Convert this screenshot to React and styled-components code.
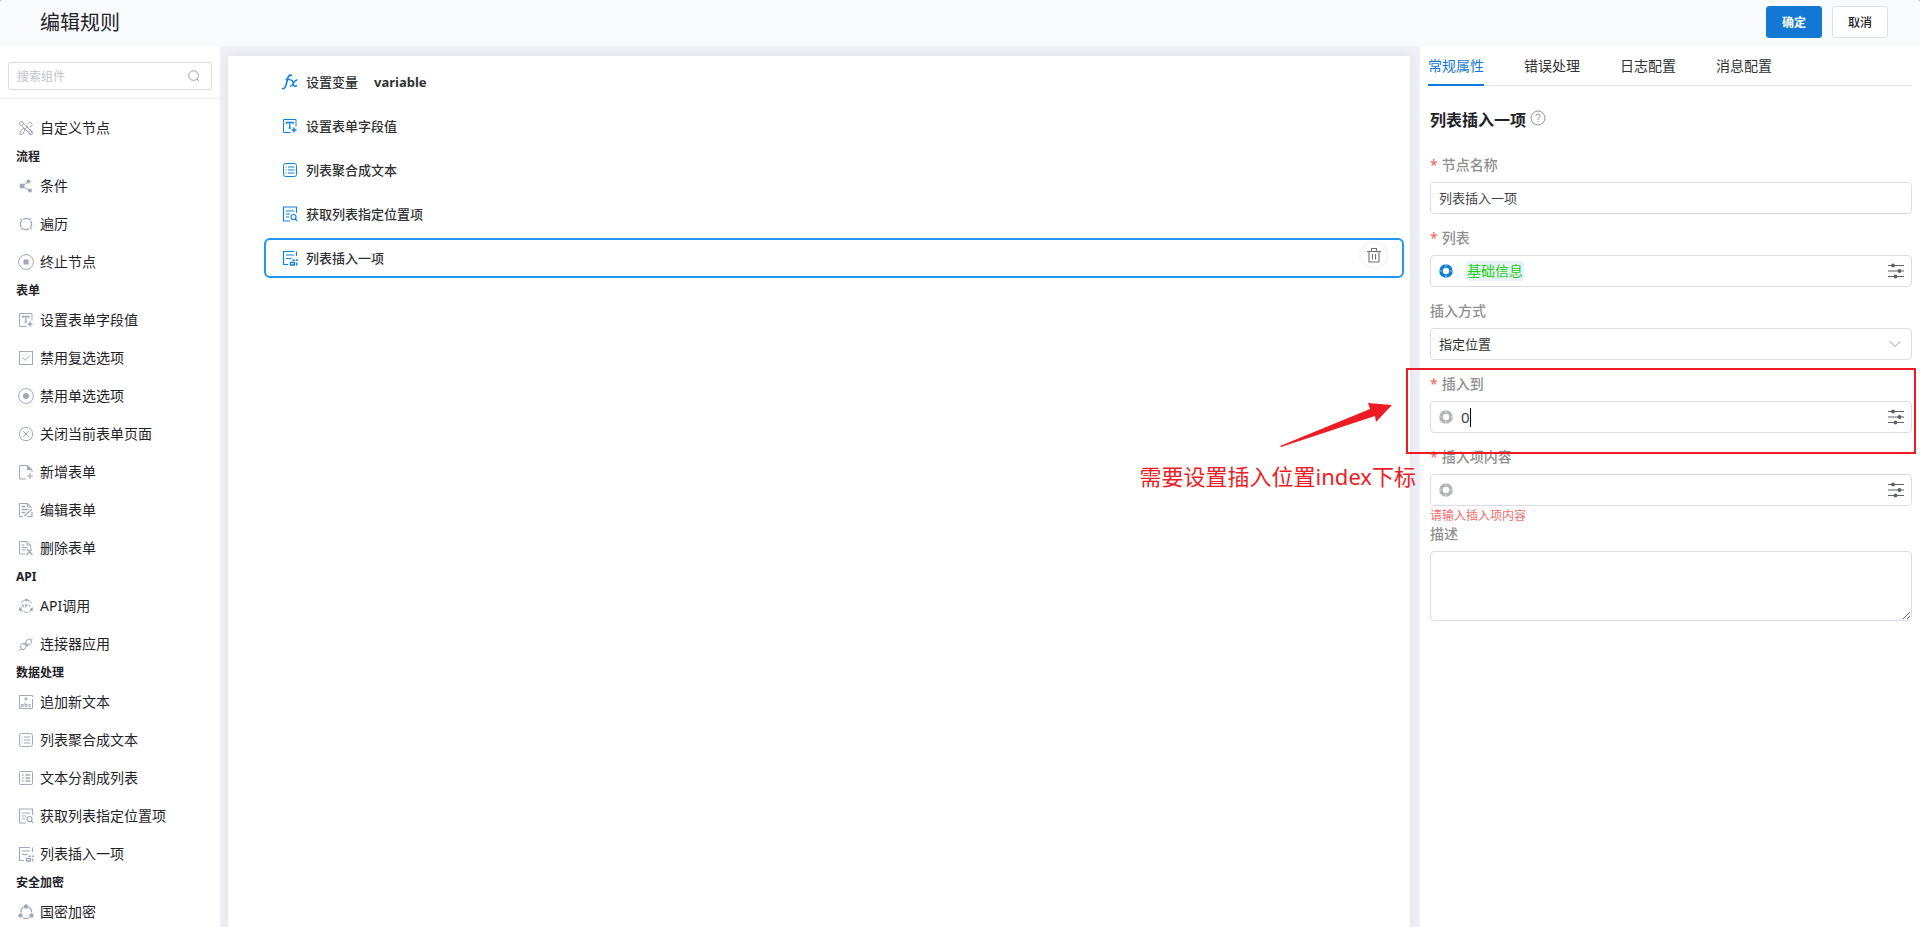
import React, { useState } from "react";
import styled, { createGlobalStyle } from "styled-components";

const GlobalStyle = createGlobalStyle`
  * {
    box-sizing: border-box;
  }
  body {
    margin: 0;
    background-color: #c9cacc;
    font-family: "Noto Sans", "Noto Sans CJK SC", sans-serif;
    font-size: 14px;
    line-height: 20px;
    color: #1f2329;
  }
  button, input, select, textarea {
    font-family: inherit;
  }
`;

const PageStyles = styled.div`
  display: flex;
  flex-direction: column;
  height: 100vh;
  border-radius: 4px 4px 0 0;
  overflow: hidden;
  background-color: #efeff5;
`;

const Header = styled.header`
  display: flex;
  align-items: center;
  justify-content: space-between;
  flex: 0 0 46px;
  padding: 0 32px 0 40px;
  background-color: #f8fafc;
`;

const PageTitle = styled.h1`
  margin: 0;
  font-size: 20px;
  line-height: 28px;
  font-weight: 400;
`;

const HeaderActions = styled.div`
  display: flex;
  gap: 10px;
  padding-bottom: 2px;
`;

const HeaderButton = styled.button`
  width: 56px;
  height: 32px;
  padding: 0;
  border: 1px solid ${(props) => (props.$primary ? "#1378d4" : "#dcdfe6")};
  border-radius: 3px;
  background-color: ${(props) => (props.$primary ? "#1378d4" : "#fff")};
  color: ${(props) => (props.$primary ? "#fff" : "#1f2329")};
  font-size: 12px;
  font-weight: ${(props) => (props.$primary ? 700 : 500)};
  cursor: pointer;
`;

const Body = styled.div`
  display: grid;
  grid-template-columns: 220px minmax(0, 1fr) 500px;
  flex: 1;
  min-height: 0;
`;

const Sidebar = styled.aside`
  display: flex;
  flex-direction: column;
  min-height: 0;
  background-color: #fff;
`;

const SearchBar = styled.div`
  padding: 16px 8px 8px;
  border-bottom: 1px solid #ebedf2;
`;

const SearchBox = styled.label`
  display: flex;
  align-items: center;
  height: 28px;
  padding: 0 10px 0 8px;
  border: 1px solid #dadbe6;
  border-radius: 3px;
  color: #8f949e;
  input {
    flex: 1;
    min-width: 0;
    padding: 0;
    border: none;
    outline: none;
    font-size: 12px;
    &::placeholder {
      color: #bfc3cc;
    }
  }
`;

const ComponentList = styled.div`
  flex: 1;
  min-height: 0;
  padding-top: 10px;
  overflow-y: auto;
  scrollbar-width: none;
`;

const GroupTitle = styled.h2`
  margin: 0;
  padding-left: 16px;
  font-size: 12px;
  line-height: 20px;
  font-weight: 700;
`;

const GroupItems = styled.ul`
  margin: 0;
  padding: 0;
  list-style: none;
`;

const ComponentItem = styled.li`
  display: flex;
  align-items: center;
  gap: 6px;
  height: 38px;
  padding-left: 18px;
  cursor: grab;
  svg {
    color: #9ea9bb;
  }
`;

const Canvas = styled.main`
  margin: 10px 10px 0 8px;
  padding: 6px 6px 0 36px;
  background-color: #fff;
  box-shadow: 0 0 10px rgba(60, 60, 90, 0.08);
`;

const NodeList = styled.ol`
  display: flex;
  flex-direction: column;
  gap: 4px;
  margin: 0;
  padding: 0;
  list-style: none;
`;

const NodeItem = styled.li`
  display: flex;
  align-items: center;
  gap: 8px;
  height: 40px;
  padding: 0 16px;
  border: 2px solid ${(props) => (props.$active ? "#2196f3" : "transparent")};
  border-radius: 6px;
  color: #303133;
  font-size: 13px;
  font-weight: 500;
  svg {
    color: #1280dd;
  }
`;

const NodeVariable = styled.span`
  margin-left: 8px;
  font-weight: 700;
`;

const DeleteButton = styled.button`
  display: flex;
  align-items: center;
  justify-content: center;
  width: 24px;
  height: 24px;
  margin: 0 0 6px auto;
  padding: 0;
  border: none;
  border-radius: 50%;
  background-color: #fff;
  box-shadow: 0 0 6px rgba(0, 0, 0, 0.1);
  cursor: pointer;
  ${NodeItem} & svg {
    color: #6f7073;
  }
`;

const Panel = styled.aside`
  padding: 0 8px;
  background-color: #fff;
`;

const Tabs = styled.div`
  display: flex;
  gap: 40px;
  border-bottom: 1px solid #e2e4ee;
`;

const Tab = styled.button`
  height: 40px;
  margin-bottom: -1px;
  padding: 0;
  border: none;
  border-bottom: 2px solid ${(props) => (props.$active ? "#1378d4" : "transparent")};
  background: none;
  color: ${(props) => (props.$active ? "#1378d4" : "#303133")};
  font-size: 14px;
  cursor: pointer;
`;

const Form = styled.form`
  padding: 22px 0 0 2px;
`;

const FormTitle = styled.h2`
  display: flex;
  align-items: center;
  gap: 4px;
  margin: 0 0 21px;
  font-size: 16px;
  line-height: 24px;
  font-weight: 700;
  svg {
    margin-bottom: 4px;
    color: #909399;
  }
`;

const Field = styled.div`
  position: relative;
  margin-bottom: ${(props) => (props.$compact ? 0 : 12)}px;
`;

const FieldLabel = styled.label`
  display: block;
  margin-bottom: 5px;
  color: #8f8f8f;
  font-size: 14px;
  line-height: 24px;
  font-weight: 500;
`;

const Required = styled.span`
  margin-right: 4px;
  color: #f56c6c;
`;

const Control = styled.div`
  display: flex;
  align-items: center;
  height: 32px;
  padding: 0 7px;
  border: 1px solid #dadbe6;
  border-radius: 4px;
  background-color: #fff;
`;

const TextInput = styled.input`
  display: block;
  width: 100%;
  height: 32px;
  padding: 0 8px 2px;
  border: 1px solid #dadbe6;
  border-radius: 4px;
  outline: none;
  color: #404246;
  font-size: 13px;
`;

const SelectBox = styled.div`
  position: relative;
  select {
    width: 100%;
    height: 32px;
    padding: 0 8px;
    border: 1px solid #dadbe6;
    border-radius: 4px;
    outline: none;
    appearance: none;
    background-color: #fff;
    color: #303133;
    font-size: 13px;
  }
  svg {
    position: absolute;
    top: 9px;
    right: 10px;
    color: #b0b4be;
    pointer-events: none;
  }
`;

const ExprIcon = styled.span`
  display: flex;
  margin-right: ${(props) => (props.$active ? 12 : 7)}px;
  color: ${(props) => (props.$active ? "#0d7ddb" : "#b1b3b8")};
`;

const Tag = styled.span`
  padding: 0 1px;
  border-radius: 4px;
  background-color: #e6f1fb;
  color: #22cf12;
`;

const ExprInput = styled.input`
  width: ${(props) => (props.$filled ? "1ch" : "60%")};
  padding: 0;
  border: none;
  outline: none;
  background: none;
  color: #404246;
  font-size: 15px;
`;

const Caret = styled.span`
  width: 1px;
  height: 19px;
  background-color: #000;
`;

const SettingButton = styled.button`
  display: flex;
  margin-left: auto;
  padding: 0;
  border: none;
  background: none;
  color: #5f6166;
  cursor: pointer;
`;

const ErrorText = styled.p`
  margin: 0;
  padding-top: 4px;
  color: #f56c6c;
  font-size: 12px;
  line-height: 12px;
`;

const TextArea = styled.textarea`
  display: block;
  width: 100%;
  height: 70px;
  padding: 4px 8px;
  border: 1px solid #dadbe6;
  border-radius: 4px;
  outline: none;
  resize: vertical;
`;

// Red mark laid over the field, with its arrow and note to the left
const MarkStyles = styled.div`
  position: absolute;
  z-index: 2;
  top: -4px;
  left: -24px;
  right: -4px;
  height: 86px;
  border: 2px solid #ed1c24;
  pointer-events: none;
  svg {
    position: absolute;
    top: 32px;
    right: 522px;
  }
  p {
    position: absolute;
    top: 90px;
    right: 498px;
    margin: 0;
    color: #ed1c24;
    font-size: 22px;
    line-height: 32px;
    white-space: nowrap;
  }
`;

const icons = {
  custom: (
    <>
      <path d="M5.500 3.500 14 12 12 14 3.500 5.500" />
      <circle cx="3.500" cy="3.500" r="2" />
      <circle cx="12.700" cy="12.700" r="2" />
      <path d="M9.500 4.500 12 2 14.500 4.500 11.500 7.500M7 9.500 5 14 1.800 14.500 2.500 11 6 8M10 6 6.500 9.500" />
    </>
  ),
  branch: (
    <>
      <path d="M11 3.500 4 8l8 4.500" />
      <g fill="currentColor" stroke="none">
        <circle cx="4" cy="8" r="2.500" />
        <circle cx="10.500" cy="3.500" r="2" />
        <circle cx="12" cy="12.500" r="2" />
      </g>
    </>
  ),
  loop: (
    <>
      <path
        d="M5 3.200Q8 1.500 11 3.200M12.800 5Q14.500 8 12.800 11M11 12.800Q8 14.500 5 12.800M3.200 11Q1.500 8 3.200 5"
        strokeWidth="1.300"
      />
      <path
        d="M2 2l1 3 2-.5ZM14 2l-3 1 .5 2ZM14 14l-1-3-2 .5ZM2 14l3-1-.5-2Z"
        fill="currentColor"
        stroke="none"
      />
    </>
  ),
  stop: (
    <>
      <circle cx="8" cy="8" r="7.400" />
      <rect x="5.500" y="5.500" width="5" height="5" fill="currentColor" stroke="none" />
    </>
  ),
  setField: (
    <>
      <path d="M14 8.500v-7H1.500v13H8.500" />
      <path d="M4.500 6V4.500h6.500V6M7.750 4.500v5.500M6.500 10.200h2.500" strokeWidth="1.300" />
      <path d="M12 9.500v5M9.500 12h5" strokeWidth="1.500" />
    </>
  ),
  checkbox: (
    <>
      <rect x="1.500" y="1.500" width="13" height="13" />
      <path d="m4.500 7.500 2.700 2.800 4.300-4.600" />
    </>
  ),
  radio: (
    <>
      <circle cx="8" cy="8" r="7.400" />
      <circle cx="8" cy="8" r="3" fill="currentColor" stroke="none" />
    </>
  ),
  close: (
    <>
      <circle cx="8" cy="8" r="6.700" />
      <path d="m5 5 6 6M11 5l-6 6" />
    </>
  ),
  add: (
    <>
      <path d="M8 15H1.500V1.500H9.500L14 6v2" />
      <path d="M9 1v5h5.500Z" fill="currentColor" stroke="none" />
      <path d="M12 9v6M9 12h6" strokeWidth="1.200" />
    </>
  ),
  edit: (
    <>
      <path d="M5 14.500H1.500v-13H9.500L13 5v1M9.500 1.500V5H13" />
      <path d="M3.500 4.500h4M3.500 7.500h7M3.500 10.500h4" strokeWidth="1.300" />
      <path d="m6.500 14 7.500-7M9 14.500h5V10" strokeWidth="1.200" />
    </>
  ),
  remove: (
    <>
      <path d="M7.500 14H1.500V1.500H9L12.500 5v3.500M9 1.500V5h3.500" />
      <path d="M3.500 5h3M3.500 7.500h6M3.500 10h4M9 9l5.500 6M14 9l-5.500 6" strokeWidth="1.200" />
    </>
  ),
  api: (
    <>
      <path d="M3 5Q4.500 2.500 7 2M10 2Q12.500 3 13.500 5.500M14.500 9.500Q13.500 12.500 11 13.700M5 13.700Q2 12.500 1.500 9.500M6 14.200h4" />
      <path d="m3.500 9.500 1.300-3 1 3M7.500 9.500v-3h1.500v1.600H7.500M11.200 6.500v3" strokeWidth=".9" />
      <g fill="currentColor" stroke="none">
        <circle cx="8.500" cy="2" r="1.500" />
        <circle cx="2.500" cy="11.500" r="1.500" />
        <circle cx="13.500" cy="11.500" r="1.500" />
      </g>
    </>
  ),
  connector: (
    <>
      <rect x="8" y="3.500" width="5.500" height="5" rx="2" transform="rotate(-45 10.750 6)" />
      <rect x="2.500" y="8" width="5.500" height="5" rx="2" transform="rotate(-45 5.250 10.500)" />
      <path d="m12.500 4 2.300-2.300M3.500 12.500 1.200 14.800M7 7l3 3M6 7l3.500 3.500" />
    </>
  ),
  append: (
    <>
      <path d="M14.500 5v9.500H1.500v-13H14.500V3M8 3v4M6 5h4" />
      <path d="M3.500 12.500v-2h1.700v2ZM7 8.500v4h1.800v-2H7M12.500 10.500H10.800v2h1.700" />
    </>
  ),
  merge: (
    <>
      <rect x="1.500" y="1.500" width="13" height="13" rx="2" />
      <path d="M3.500 5h1M6 5h6.500M3.500 8h1M6 8h6.500M3.500 11h1M6 11h6.500" strokeWidth="1.200" />
    </>
  ),
  split: (
    <>
      <rect x="1.500" y="1.500" width="13" height="13" rx="1" />
      <path d="M4 5h1.500M7.500 5h4.500M4 8h1.500M7.500 8h4.500M4 11h1.500M7.500 11h4.500" strokeWidth="1.300" />
    </>
  ),
  getItem: (
    <>
      <path d="M14.500 7V1h-13v14H8M4 5h8M4 8h4M4 11h3" strokeWidth="1.200" />
      <circle cx="11.500" cy="11" r="2.500" strokeWidth="1.200" />
      <path d="m13.300 13 1.700 2" strokeWidth="1.300" />
    </>
  ),
  insertItem: (
    <>
      <path d="M14.500 6V1.500M12 1.500H1.500v13H6M4 5h8M4 8.500h5.500" strokeWidth="1.200" />
      <path d="M8.500 12.500h4v2.500h-4ZM10.500 10.200H13M14 10.200h2M14.800 12.500v3" strokeWidth="1.400" />
    </>
  ),
  encrypt: (
    <>
      <path d="M3 8.500Q2.500 5 5.500 3M10.500 3Q14 5 13.500 8.500M11.500 13.500Q8 15.500 5 13.700" strokeWidth="1.300" />
      <g fill="currentColor" stroke="none">
        <circle cx="8" cy="2.500" r="2.200" />
        <circle cx="2.500" cy="11.500" r="2.200" />
        <circle cx="13.500" cy="11.500" r="2.200" />
      </g>
    </>
  ),
  fx: (
    <>
      <path d="M0 14.500Q3 15.500 4.200 10.500L5.800 4Q6.700.5 10 1.200M3.500 5.500h5" strokeWidth="1.600" />
      <path d="M8.500 6.500Q10.500 5.500 11 8.500 11.500 13 13.500 12.200L15 11.500M15.500 6Q13.500 5.500 12 8.500 10 12.500 8 12" strokeWidth="1.500" />
    </>
  ),
  search: (
    <>
      <circle cx="7.500" cy="7.500" r="5.500" />
      <path d="m11.500 11.500 2 2" />
    </>
  ),
  chevron: <path d="m2 5 6 6 6-6" strokeWidth="1.200" />,
  trash: <path d="M1 4.500h14M5.500 4V1.500h5V4M3 5v10h10V5M6.500 7v5.500M9.500 7v5.500" strokeWidth="1.100" />,
  help: (
    <>
      <circle cx="8" cy="8" r="7" />
      <path d="M5.800 6.300q0-2.200 2.200-2.200t2.200 2Q10.200 7.500 8 8.600v1.200M8 11.200v1.200" />
    </>
  ),
  ring: (
    <>
      <circle cx="8" cy="8" r="5" strokeWidth="3.600" />
      <path d="M8 1v3M8 12v3M1 8h3M12 8h3" stroke="#fff" strokeOpacity=".5" strokeWidth="1.200" />
    </>
  ),
  setting: (
    <>
      <path d="M0 2.500h16M0 8h16M0 13.500h16" strokeWidth="1.200" />
      <g fill="currentColor" stroke="none">
        <circle cx="5" cy="2.500" r="1.900" />
        <circle cx="11.500" cy="8" r="1.900" />
        <circle cx="7.500" cy="13.500" r="1.900" />
      </g>
    </>
  ),
};

const Icon = ({ name, size = 16 }) => (
  <svg
    width={size}
    height={size}
    viewBox="0 0 16 16"
    fill="none"
    stroke="currentColor"
    strokeWidth="1"
    aria-hidden="true"
  >
    {icons[name]}
  </svg>
);

const groups = [
  { items: [["custom", "自定义节点"]] },
  {
    title: "流程",
    items: [
      ["branch", "条件"],
      ["loop", "遍历"],
      ["stop", "终止节点"],
    ],
  },
  {
    title: "表单",
    items: [
      ["setField", "设置表单字段值"],
      ["checkbox", "禁用复选选项"],
      ["radio", "禁用单选选项"],
      ["close", "关闭当前表单页面"],
      ["add", "新增表单"],
      ["edit", "编辑表单"],
      ["remove", "删除表单"],
    ],
  },
  {
    title: "API",
    items: [
      ["api", "API调用"],
      ["connector", "连接器应用"],
    ],
  },
  {
    title: "数据处理",
    items: [
      ["append", "追加新文本"],
      ["merge", "列表聚合成文本"],
      ["split", "文本分割成列表"],
      ["getItem", "获取列表指定位置项"],
      ["insertItem", "列表插入一项"],
    ],
  },
  { title: "安全加密", items: [["encrypt", "国密加密"]] },
];

const nodes = [
  { icon: "fx", name: "设置变量", variable: "variable" },
  { icon: "setField", name: "设置表单字段值" },
  { icon: "merge", name: "列表聚合成文本" },
  { icon: "getItem", name: "获取列表指定位置项" },
  { icon: "insertItem", name: "列表插入一项" },
];

const tabs = ["常规属性", "错误处理", "日志配置", "消息配置"];

const Label = ({ required, children, ...props }) => (
  <FieldLabel {...props}>
    {required && <Required>*</Required>}
    {children}
  </FieldLabel>
);

const Mark = () => (
  <MarkStyles>
    <svg width="112" height="46" viewBox="0 0 112 46" fill="#ed1c24">
      <path d="M0 44 90 7 88 1 112 3 96 20 95 14 1 45Z" />
    </svg>
    <p>需要设置插入位置index下标</p>
  </MarkStyles>
);

const ComponentSidebar = () => (
  <Sidebar>
    <SearchBar>
      <SearchBox>
        <input type="text" placeholder="搜索组件" aria-label="搜索组件" />
        <Icon name="search" size={14} />
      </SearchBox>
    </SearchBar>
    <ComponentList>
      {groups.map((group, index) => (
        <section key={index}>
          {group.title && <GroupTitle>{group.title}</GroupTitle>}
          <GroupItems>
            {group.items.map(([icon, name]) => (
              <ComponentItem key={name}>
                <Icon name={icon} />
                {name}
              </ComponentItem>
            ))}
          </GroupItems>
        </section>
      ))}
    </ComponentList>
  </Sidebar>
);

const NodeCanvas = () => {
  const [active, setActive] = useState(4);

  return (
    <Canvas>
      <NodeList>
        {nodes.map((node, index) => (
          <NodeItem
            key={node.name}
            $active={index === active}
            onClick={() => setActive(index)}
          >
            <Icon name={node.icon} />
            {node.name}
            {node.variable && <NodeVariable>{node.variable}</NodeVariable>}
            {index === active && (
              <DeleteButton type="button" aria-label="删除">
                <Icon name="trash" />
              </DeleteButton>
            )}
          </NodeItem>
        ))}
      </NodeList>
    </Canvas>
  );
};

const PropertyPanel = () => {
  const [tab, setTab] = useState(tabs[0]);
  const [position, setPosition] = useState("0");

  return (
    <Panel>
      <Tabs role="tablist">
        {tabs.map((name) => (
          <Tab
            key={name}
            type="button"
            role="tab"
            aria-selected={name === tab}
            $active={name === tab}
            onClick={() => setTab(name)}
          >
            {name}
          </Tab>
        ))}
      </Tabs>
      <Form>
        <FormTitle>
          列表插入一项
          <Icon name="help" />
        </FormTitle>
        <Field>
          <Label required htmlFor="name">
            节点名称
          </Label>
          <TextInput id="name" type="text" defaultValue="列表插入一项" />
        </Field>
        <Field>
          <Label required as="div">
            列表
          </Label>
          <Control>
            <ExprIcon $active>
              <Icon name="ring" />
            </ExprIcon>
            <Tag>基础信息</Tag>
            <SettingButton type="button" aria-label="设置">
              <Icon name="setting" />
            </SettingButton>
          </Control>
        </Field>
        <Field>
          <Label htmlFor="mode">插入方式</Label>
          <SelectBox>
            <select id="mode" defaultValue="index">
              <option value="index">指定位置</option>
            </select>
            <Icon name="chevron" size={14} />
          </SelectBox>
        </Field>
        <Field>
          <Label required htmlFor="position">
            插入到
          </Label>
          <Control>
            <ExprIcon>
              <Icon name="ring" />
            </ExprIcon>
            <ExprInput
              id="position"
              type="text"
              $filled
              value={position}
              onChange={(e) => setPosition(e.target.value)}
            />
            <Caret />
            <SettingButton type="button" aria-label="设置">
              <Icon name="setting" />
            </SettingButton>
          </Control>
          <Mark />
        </Field>
        <Field $compact>
          <Label required htmlFor="content">
            插入项内容
          </Label>
          <Control>
            <ExprIcon>
              <Icon name="ring" />
            </ExprIcon>
            <ExprInput id="content" type="text" />
            <SettingButton type="button" aria-label="设置">
              <Icon name="setting" />
            </SettingButton>
          </Control>
          <ErrorText>请输入插入项内容</ErrorText>
        </Field>
        <Field>
          <Label htmlFor="desc">描述</Label>
          <TextArea id="desc" />
        </Field>
      </Form>
    </Panel>
  );
};

const App = () => {
  return (
    <>
      <GlobalStyle />
      <PageStyles>
        <Header>
          <PageTitle>编辑规则</PageTitle>
          <HeaderActions>
            <HeaderButton type="button" $primary>
              确定
            </HeaderButton>
            <HeaderButton type="button">取消</HeaderButton>
          </HeaderActions>
        </Header>
        <Body>
          <ComponentSidebar />
          <NodeCanvas />
          <PropertyPanel />
        </Body>
      </PageStyles>
    </>
  );
};

export default App;
